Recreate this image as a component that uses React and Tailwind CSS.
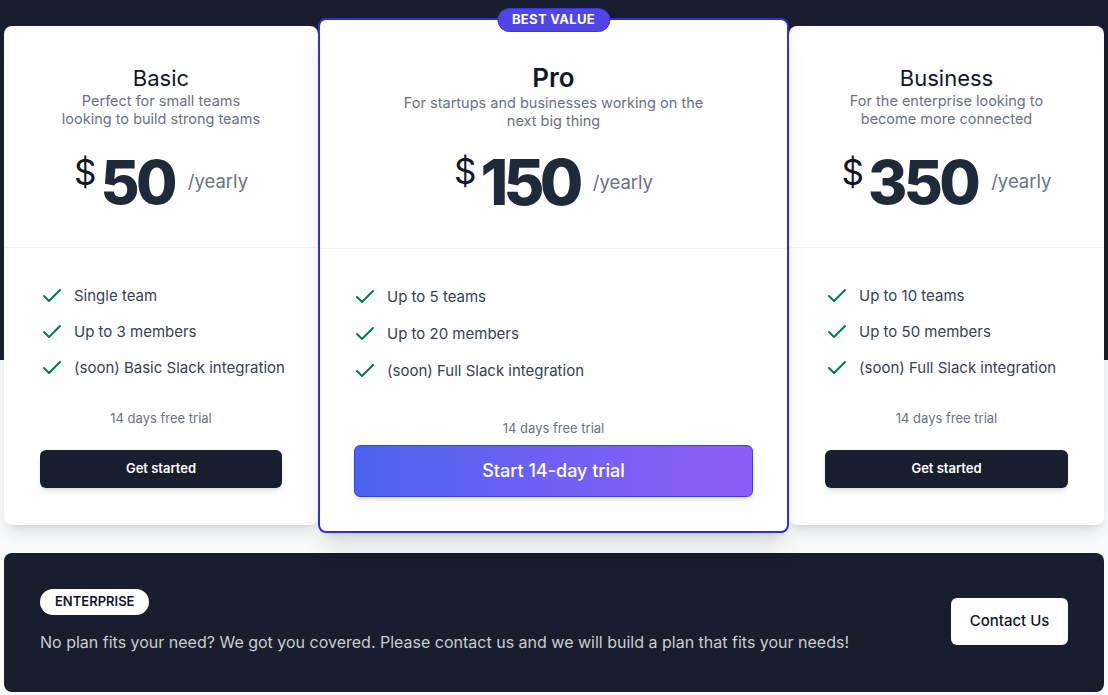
import { Check } from "lucide-react";

const plans = [
  {
    name: "Basic",
    desc: "Perfect for small teams looking to build strong teams",
    price: "50",
    features: ["Single team", "Up to 3 members", "(soon) Basic Slack integration"],
  },
  {
    name: "Pro",
    desc: "For startups and businesses working on the next big thing",
    price: "150",
    features: ["Up to 5 teams", "Up to 20 members", "(soon) Full Slack integration"],
    featured: true,
  },
  {
    name: "Business",
    desc: "For the enterprise looking to become more connected",
    price: "350",
    features: ["Up to 10 teams", "Up to 50 members", "(soon) Full Slack integration"],
  },
];

function FeatureList({ items, gap }) {
  return (
    <ul className={`flex flex-col ${gap}`}>
      {items.map((f) => (
        <li key={f} className="flex items-center gap-2.5 whitespace-nowrap text-[15px] leading-6 text-gray-700">
          <Check className="h-6 w-6 shrink-0 text-emerald-700" strokeWidth={2} />
          {f}
        </li>
      ))}
    </ul>
  );
}

function Price({ value, big }) {
  return (
    <div className="flex items-center">
      <span className="self-start text-[35px] leading-10 text-gray-900">$</span>
      <span
        className={`ml-1 leading-none font-extrabold text-gray-800 ${
          big ? "text-[63px] tracking-[-0.075em]" : "text-6xl tracking-[-0.06em]"
        }`}
      >
        {value}
      </span>
      <span className="ml-3.5 text-[18.5px] text-gray-500">/yearly</span>
    </div>
  );
}

function SideCard({ plan, className }) {
  return (
    <div className={`mt-2 flex flex-col rounded-lg bg-white shadow-lg ${className}`}>
      {/* header */}
      <div className="flex flex-col items-center border-b border-gray-100 px-6 pt-[38px] pb-[35px] text-center">
        <h3 className="text-[22px] leading-7 text-gray-900">{plan.name}</h3>
        <p className="max-w-[205px] text-[14.5px] leading-[18px] text-gray-500">{plan.desc}</p>
        <div className="mt-6">
          <Price value={plan.price} />
        </div>
      </div>

      <div className="pt-9 pl-9">
        <FeatureList items={plan.features} gap="gap-3" />
      </div>

      <div className="flex flex-col items-center px-9 pb-[37px]">
        <p className="mt-7 text-[13px] leading-5 text-gray-500">14 days free trial</p>
        <button
          type="button"
          className="mt-[22px] h-[38px] w-full rounded-md bg-[#181e2d] text-[13px] font-semibold text-white shadow-md"
        >
          Get started
        </button>
      </div>
    </div>
  );
}

function ProCard({ plan }) {
  return (
    <div className="relative z-10 flex flex-1 flex-col rounded-lg border-2 border-[#2f2fd6] bg-white shadow-xl">
      <span className="absolute -top-3 left-1/2 flex h-6 -translate-x-1/2 items-center rounded-full border border-[#3b35d8] bg-[#4f46e5] px-[14px] text-[13px] font-bold tracking-wide text-white">
        BEST VALUE
      </span>

      <div className="flex flex-col items-center border-b border-gray-100 px-6 pt-[42px] pb-[34px] text-center">
        <h3 className="text-[26px] leading-8 font-semibold text-gray-900">{plan.name}</h3>
        <p className="max-w-[310px] text-[14.5px] leading-[18px] text-gray-500">{plan.desc}</p>
        <div className="mt-[21px]">
          <Price value={plan.price} big />
        </div>
      </div>

      <div className="pt-9 pl-[33px]">
        <FeatureList items={plan.features} gap="gap-[13px]" />
      </div>

      <div className="flex flex-col items-center px-[34px] pb-[34px]">
        <p className="mt-[35px] text-[13px] leading-5 text-gray-500">14 days free trial</p>
        <button
          type="button"
          className="mt-[7px] h-[52px] w-full rounded-md border border-[#3347e0] bg-gradient-to-r from-[#4c63f0] to-[#8d5cf6] text-lg font-medium text-white shadow-md"
        >
          Start 14-day trial
        </button>
      </div>
    </div>
  );
}

export default function App() {
  return (
    <div
      className="min-h-screen bg-[linear-gradient(to_bottom,#181e2d_360px,#f9fafb_360px)] px-1 pt-[18px]"
      style={{ fontFamily: "Inter, 'Noto Sans', sans-serif" }}
    >
      <div className="flex items-start">
        <SideCard plan={plans[0]} className="w-[314px]" />
        <ProCard plan={plans[1]} />
        <SideCard plan={plans[2]} className="w-[315px]" />
      </div>

      {/* enterprise banner */}
      <div className="mt-5 flex items-center justify-between rounded-lg bg-[#181e2d] pt-9 pr-9 pb-[38px] pl-9">
        <div className="flex flex-col items-start">
          <span className="flex h-[26px] items-center rounded-full bg-white px-[15px] text-[13px] font-semibold text-gray-900">
            ENTERPRISE
          </span>
          <p className="mt-[15px] text-base leading-6 text-[#c9ccd3]">
            No plan fits your need? We got you covered. Please contact us and we will build a plan that fits your needs!
          </p>
        </div>
        <button
          type="button"
          className="h-[47px] w-[117px] rounded-md bg-white text-[15px] font-medium text-gray-900"
        >
          Contact Us
        </button>
      </div>
    </div>
  );
}
